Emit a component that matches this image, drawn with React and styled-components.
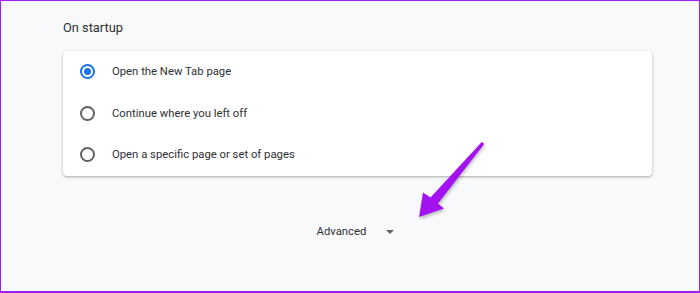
import React from 'react'
import styled, { createGlobalStyle } from 'styled-components'

const Global = createGlobalStyle`
    html, body {
        margin: 0;
        padding: 0;
        background: #f8f9fa;
    }
`;

const Frame = styled.div`
    position: relative;
    width: 700px;
    height: 293px;
    box-sizing: border-box;
    border: 1px solid #a21ff0;
    border-bottom-width: 2px;
    background: #f8f9fa;
    padding: 19px 0 0 62px;
    font-family: Roboto, "Liberation Sans", Arial, sans-serif;
    color: #202124;
`;

const Heading = styled.div`
    font-size: 12.8px;
    line-height: 16px;
    height: 16px;
    margin-bottom: 15px;
    color: #2d2f33;
`;

const Card = styled.div`
    width: 589px;
    background: #fff;
    border-radius: 4px;
    box-shadow: 0 1px 2px 0 rgba(60, 64, 67, 0.3), 0 1px 3px 1px rgba(60, 64, 67, 0.1);
`;

const Row = styled.label`
    display: flex;
    align-items: center;
    height: 41.5px;
    padding-left: 17px;
    font-size: 11.3px;
    color: #2d2f33;
`;

const Radio = styled.span`
    box-sizing: border-box;
    width: 15px;
    height: 15px;
    border-radius: 50%;
    border: 2px solid ${p => (p.checked ? '#1a73e8' : '#5f6368')};
    display: flex;
    align-items: center;
    justify-content: center;
    margin-right: 17px;
    flex-shrink: 0;
    &::after {
        content: '';
        display: ${p => (p.checked ? 'block' : 'none')};
        width: 7px;
        height: 7px;
        border-radius: 50%;
        background: #1a73e8;
    }
`;

const AdvancedRow = styled.div`
    width: 589px;
    display: flex;
    justify-content: center;
    align-items: center;
    margin-top: 49px;
    gap: 20px;
    font-size: 11.3px;
    color: #2d2f33;
    padding-right: 4px;
    box-sizing: border-box;
`;

const Caret = styled.span`
    width: 0;
    height: 0;
    border-left: 4px solid transparent;
    border-right: 4px solid transparent;
    border-top: 4px solid #5f6368;
    margin-top: 1px;
`;

const Pointer = styled.svg`
    position: absolute;
    left: 0;
    top: 0;
    pointer-events: none;
    filter: drop-shadow(1px 2px 1.5px rgba(0, 0, 0, 0.25));
`;

const options = [
    { label: 'Open the New Tab page', checked: true },
    { label: 'Continue where you left off', checked: false },
    { label: 'Open a specific page or set of pages', checked: false },
];

export default function App() {
    return (
        <>
            <Global />
            <Frame>
                <Heading>On startup</Heading>
                <Card>
                    {options.map(o => (
                        <Row key={o.label}>
                            <Radio checked={o.checked} />
                            {o.label}
                        </Row>
                    ))}
                </Card>
                <AdvancedRow>
                    <span>Advanced</span>
                    <Caret />
                </AdvancedRow>
                <Pointer width="698" height="290" viewBox="1 1 698 290">
                    <path
                        d="M481.5 142.2 Q483.5 142 484 144.2 L438 203.5 L444 208.5 L419 217 L423 192.5 L430.5 197.5 Z"
                        fill="#a313f2"
                    />
                </Pointer>
            </Frame>
        </>
    )
}
